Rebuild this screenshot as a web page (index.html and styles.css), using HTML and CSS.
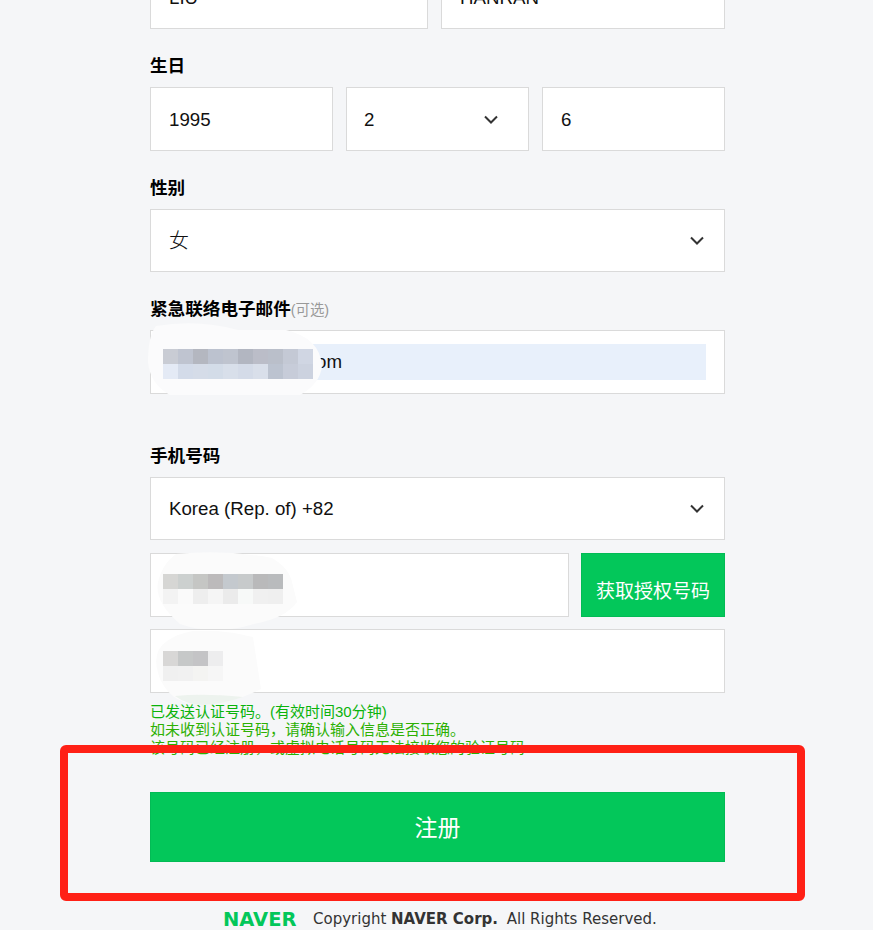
FILE: index.html
```html
<!DOCTYPE html>
<html lang="zh-CN">
<head>
<meta charset="utf-8">
<title>注册</title>
<link rel="stylesheet" href="styles.css">
</head>
<body>
<main class="form">
  <div class="row row-name">
    <div class="field name-first">LIU</div>
    <div class="field name-last">HANRAN</div>
  </div>

  <section class="group">
    <div class="label">生日</div>
    <div class="row">
      <div class="field third">1995</div>
      <div class="field third select select-small">
        <span>2</span>
        <svg class="chev" viewBox="0 0 14 9"><path d="M1 1.5 7 7.5 13 1.5"/></svg>
      </div>
      <div class="field third">6</div>
    </div>
  </section>

  <section class="group">
    <div class="label">性别</div>
    <div class="field tall63 select">
      <span class="cjk-light">女</span>
      <svg class="chev" viewBox="0 0 14 9"><path d="M1 1.5 7 7.5 13 1.5"/></svg>
    </div>
  </section>

  <section class="group">
    <div class="label">紧急联络电子邮件<span class="optional">(可选)</span></div>
    <div class="field autofill-field">
      <div class="autofill">om</div>
      <svg class="mosaic mosaic-email" viewBox="0 0 175 74">
        <path class="blob" d="M8 4 Q50 -3 90 8 H138 Q172 16 174 44 Q172 62 152 73 H22 Q2 62 0 40 Q0 14 8 4Z"/>
        <g>
          <rect x="15" y="27" width="15" height="15" fill="#c9ccd4"/><rect x="30" y="27" width="15" height="15" fill="#bfc4d0"/><rect x="45" y="27" width="15" height="15" fill="#b4b7c0"/><rect x="60" y="27" width="15" height="15" fill="#bcc2cf"/><rect x="75" y="27" width="15" height="15" fill="#bfc4cf"/><rect x="90" y="27" width="15" height="15" fill="#b2b6c1"/><rect x="105" y="27" width="15" height="15" fill="#bbbdc8"/><rect x="120" y="27" width="15" height="15" fill="#babfca"/><rect x="135" y="27" width="15" height="15" fill="#c4c9d5"/><rect x="150" y="27" width="15" height="15" fill="#d0d6e3"/>
          <rect x="15" y="42" width="15" height="15" fill="#e4eaf5"/><rect x="30" y="42" width="15" height="15" fill="#d3dbe9"/><rect x="45" y="42" width="15" height="15" fill="#d5dce8"/><rect x="60" y="42" width="15" height="15" fill="#d3dce8"/><rect x="75" y="42" width="15" height="15" fill="#d8dfea"/><rect x="90" y="42" width="15" height="15" fill="#d4dbe8"/><rect x="105" y="42" width="15" height="15" fill="#d9dfea"/><rect x="120" y="42" width="15" height="15" fill="#bcc3d0"/><rect x="135" y="42" width="15" height="15" fill="#c7ccd9"/><rect x="150" y="42" width="15" height="15" fill="#ccd2df"/>
        </g>
      </svg>
    </div>
  </section>

  <section class="group group-phone">
    <div class="label">手机号码</div>
    <div class="field tall63 select">
      <span>Korea (Rep. of) +82</span>
      <svg class="chev" viewBox="0 0 14 9"><path d="M1 1.5 7 7.5 13 1.5"/></svg>
    </div>
    <div class="row row-phone">
      <div class="field phone-input">
        <svg class="mosaic mosaic-phone" viewBox="0 0 146 82">
          <path class="blob blob-soft" d="M22 2 Q70 -3 118 6 Q135 16 138 30 L143 50 Q132 66 100 72 Q60 84 26 72 Q0 50 4 30 Q8 12 22 2Z"/>
          <rect x="9" y="22" width="15" height="15" fill="#d6d6d4"/><rect x="24" y="22" width="15" height="15" fill="#ccd0cf"/><rect x="39" y="22" width="15" height="15" fill="#c5c6c4"/><rect x="54" y="22" width="15" height="15" fill="#bcbabb"/><rect x="69" y="22" width="15" height="15" fill="#c4c9ce"/><rect x="84" y="22" width="15" height="15" fill="#c7cacb"/><rect x="99" y="22" width="15" height="15" fill="#b9b9ba"/><rect x="114" y="22" width="15" height="15" fill="#b9bbbd"/>
          <rect x="9" y="37" width="15" height="15" fill="#f3f3f3"/><rect x="24" y="37" width="15" height="15" fill="#fafafa"/><rect x="39" y="37" width="15" height="15" fill="#eeeeee"/><rect x="54" y="37" width="15" height="15" fill="#f5f5f5"/><rect x="69" y="37" width="15" height="15" fill="#ebebeb"/><rect x="84" y="37" width="15" height="15" fill="#f7f9f8"/><rect x="99" y="37" width="15" height="15" fill="#f0f0f0"/><rect x="114" y="37" width="15" height="15" fill="#efefef"/>
        </svg>
      </div>
      <button class="green-btn auth-btn" type="button">获取授权号码</button>
    </div>
    <div class="field code-input">
      <svg class="mosaic mosaic-code" viewBox="0 0 110 76">
        <path class="blob blob-soft" d="M40 0 Q70 -2 100 6 L108 58 Q80 72 50 74 Q20 74 8 50 Q-4 22 14 10 Q26 2 40 0Z"/>
        <path class="blob blob-green" d="M22 65 Q50 62 90 66 Q70 73 50 74 Q34 74 22 65Z"/>
        <rect x="10" y="20" width="15" height="15" fill="#d8d7d6"/><rect x="25" y="20" width="15" height="15" fill="#c6c8c8"/><rect x="40" y="20" width="15" height="15" fill="#c4c4c6"/><rect x="55" y="20" width="15" height="15" fill="#ededee"/>
        <rect x="10" y="35" width="15" height="15" fill="#f0f0f0"/><rect x="25" y="35" width="15" height="15" fill="#f1f1f1"/><rect x="40" y="35" width="15" height="15" fill="#f4f4f2"/><rect x="55" y="35" width="15" height="15" fill="#f6f6f6"/>
      </svg>
    </div>
    <div class="messages">
      <p class="msg-sent">已发送认证号码。(有效时间30分钟)</p>
      <p class="msg-check">如未收到认证号码，请确认输入信息是否正确。</p>
      <p class="msg-check">该号码已经注册，或虚拟电话号码无法接收您的验证号码</p>
    </div>
  </section>

  <button class="green-btn submit" type="button">注册</button>

  <footer class="footer">
    <span class="logo">NAVER</span>
    <span class="copy">Copyright <b>NAVER Corp.</b> All Rights Reserved.</span>
  </footer>
</main>
<div class="annotation"></div>
</body>
</html>
```

FILE: styles.css
```css
* { box-sizing: border-box; }
html, body { height: 930px; overflow: hidden; }
body {
  margin: 0;
  position: relative;
  background: #f5f6f8;
  color: #111;
  font-family: "Liberation Sans", "Noto Sans CJK SC", sans-serif;
  font-size: 18.7px;
}
.form { width: 575px; margin-left: 150px; }
.row { display: flex; gap: 13px; }
.row-name { margin-top: -35px; }
.name-first { width: 278px; }
.name-last { width: 284px; padding-left: 21px; }
.group { margin-top: 25px; }
.group-phone { margin-top: 50px; }
.label {
  height: 24px;
  font-size: 17.6px;
  font-weight: 700;
  line-height: 24px;
  margin-bottom: 9px;
  color: #000;
  white-space: nowrap;
}
.optional { font-size: 14.4px; font-weight: 400; color: #999; }
.field {
  position: relative;
  display: flex;
  align-items: center;
  height: 64px;
  padding: 1px 20px 0 18px;
  background: #fff;
  border: 1px solid #dadada;
}
.third { flex: none; width: 183px; }
.tall63 { height: 63px; padding-top: 0; }
.select { justify-content: space-between; }
.select-small { padding-left: 17px; padding-right: 30px; }
.cjk-light { font-size: 20px; font-weight: 300; margin-bottom: 2px; }
.chev { width: 14px; height: 9px; flex: none; }
.chev path { fill: none; stroke: #333; stroke-width: 2; }
.autofill-field { padding: 0 18px 0 12px; }
.autofill {
  flex: 1;
  height: 36px;
  line-height: 36px;
  padding-left: 153px;
  background: #e8f0fb;
}
.row-phone { margin-top: 13px; gap: 12px; }
.phone-input { width: 419px; }
.code-input { margin-top: 12px; }
.mosaic { position: absolute; }
.mosaic-email { left: -3px; top: -9px; width: 175px; height: 74px; }
.mosaic-phone { left: 3px; top: -2px; width: 146px; height: 82px; }
.mosaic-code { left: 2px; top: 1px; width: 110px; height: 76px; }
.blob { fill: #fbfbfc; }
.blob-soft { fill: #fbfbfb; }
.blob-green { fill: #edf3ee; }
.green-btn {
  display: block;
  border: 1px solid #02bb55;
  background: #03c75a;
  color: #fff;
  font-family: "Liberation Sans", "Noto Sans CJK SC", sans-serif;
  font-weight: 400;
  padding: 0;
}
.auth-btn { width: 144px; height: 64px; font-size: 19px; padding-top: 9px; }
.messages { margin-top: 10px; font-size: 15px; line-height: 18px; height: 54px; }
.messages p { margin: 0; white-space: nowrap; }
.msg-sent { color: #0bb30b; }
.msg-check { color: #2cb002; }
.submit { width: 575px; height: 70px; margin-top: 35px; font-size: 23px; padding-bottom: 3px; }
.footer {
  display: flex;
  align-items: center;
  margin-top: 47px;
  margin-left: 73px;
  height: 20px;
  white-space: nowrap;
}
.logo {
  width: 90px;
  font-family: "DejaVu Sans", sans-serif;
  font-weight: 700;
  font-size: 19.5px;
  letter-spacing: 0;
  color: #03c75a;
}
.copy { font-family: "DejaVu Sans", sans-serif; font-size: 15px; color: #333; }
.copy b { margin-right: 4px; }
.annotation {
  position: absolute;
  left: 60px;
  top: 745px;
  width: 745px;
  height: 156px;
  border: 8px solid #ff2016;
  border-radius: 6px;
}
```
